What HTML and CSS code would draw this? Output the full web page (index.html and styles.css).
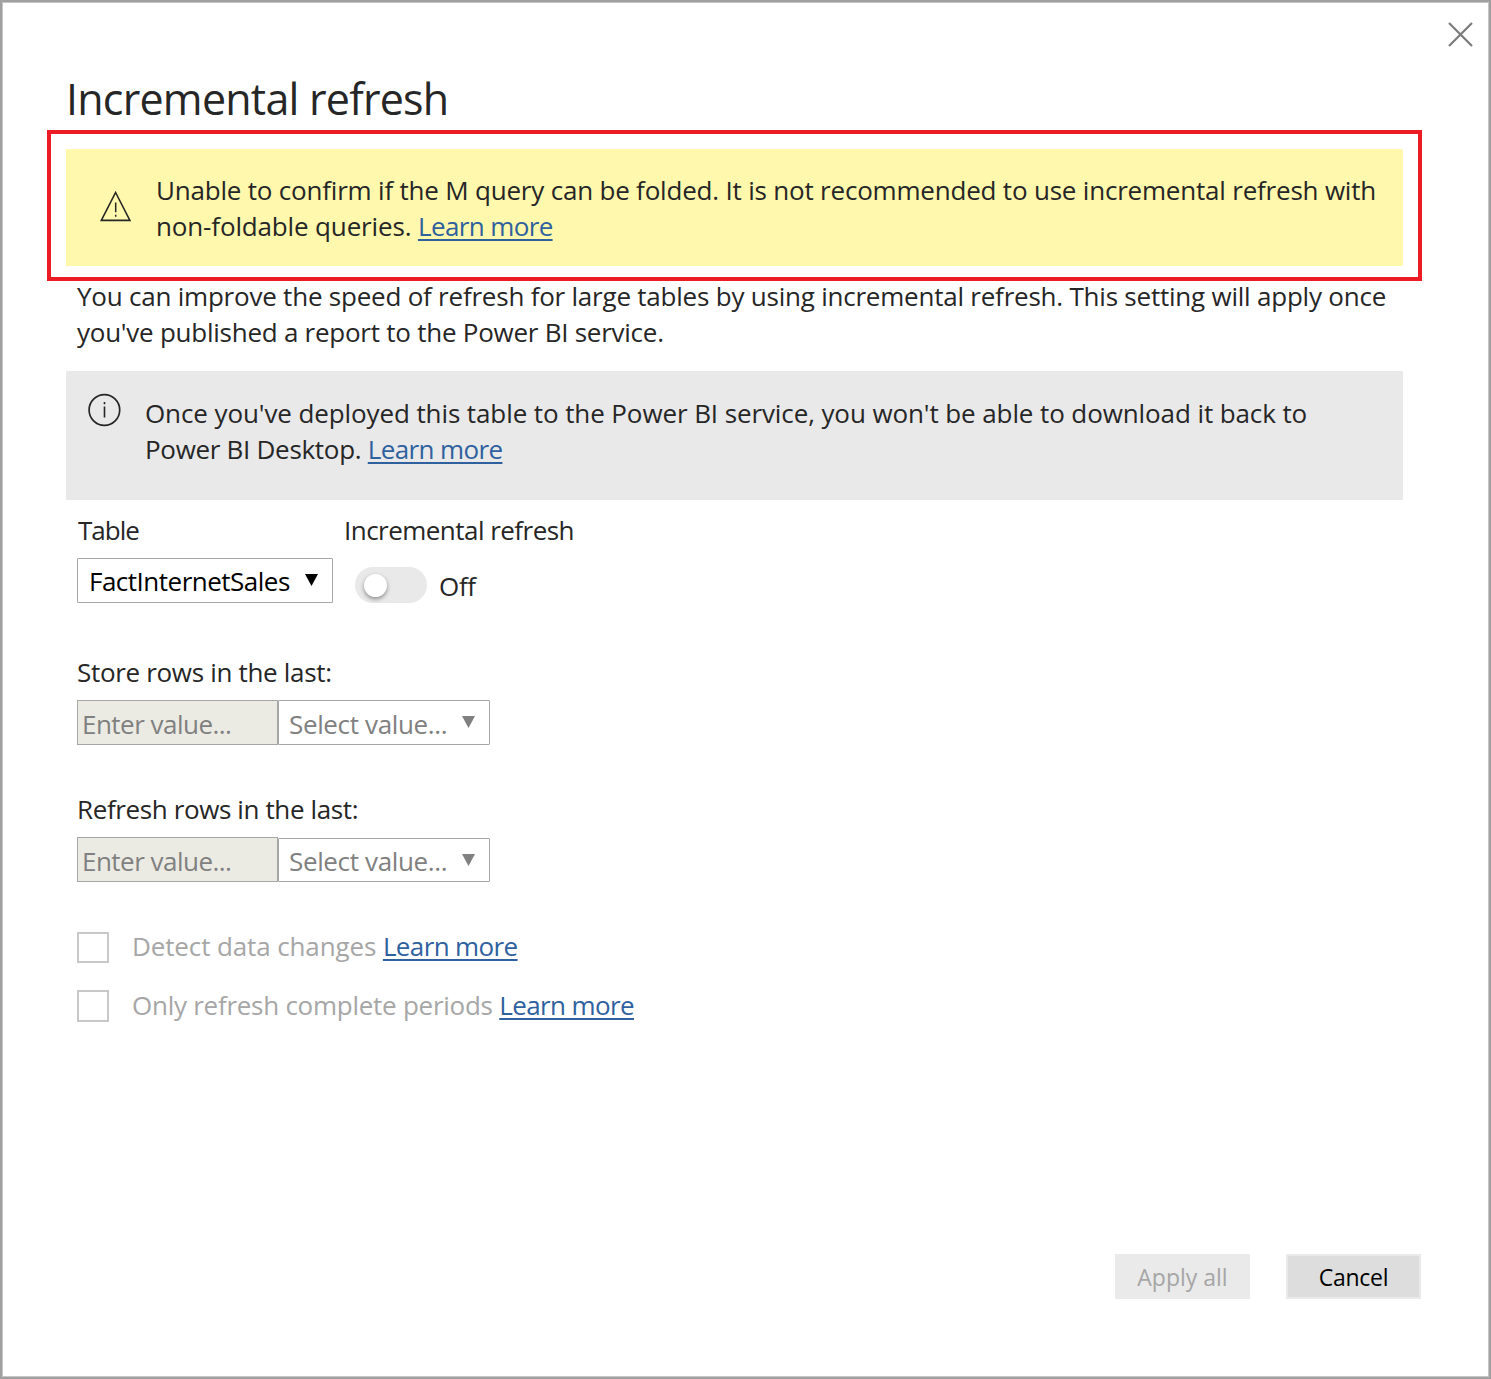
FILE: index.html
```html
<!DOCTYPE html>
<html lang="en">
<head>
<meta charset="utf-8">
<title>Incremental refresh</title>
<link rel="stylesheet" href="styles.css">
</head>
<body>
<main class="dialog">
  <header class="topbar">
    <svg class="close" viewBox="0 0 26 26" width="26" height="26"><path d="M1 1l23 23M24 1l-23 23" fill="none" stroke="#7b7b7b" stroke-width="2.2"/></svg>
  </header>
  <h1 class="title">Incremental refresh</h1>
  <section class="highlight">
    <div class="warning">
      <svg class="warning-icon" viewBox="0 0 32 32" width="32" height="32"><path d="M15.6 2.5L29.9 30.4H1.3z" fill="none" stroke="#262626" stroke-width="1.6"/><path d="M15.7 12.5v9.8M15.7 24.7v2" fill="none" stroke="#262626" stroke-width="1.5"/></svg>
      <p class="text"><span class="line w1">Unable to confirm if the M query can be folded. It is not recommended to use incremental refresh with</span><span class="line"><span class="w2">non-foldable queries. </span><a class="link">Learn more</a></span></p>
    </div>
  </section>
  <p class="text intro"><span class="line p1">You can improve the speed of refresh for large tables by using incremental refresh. This setting will apply once</span><span class="line p2">you've published a report to the Power BI service.</span></p>
  <section class="info">
    <svg class="info-icon" viewBox="0 0 34 34" width="34" height="34"><circle cx="17.4" cy="17" r="15.3" fill="none" stroke="#262626" stroke-width="1.7"/><path d="M17.5 13.5v11M17.5 9v2.2" fill="none" stroke="#262626" stroke-width="1.6"/></svg>
    <p class="text"><span class="line i1">Once you've deployed this table to the Power BI service, you won't be able to download it back to</span><span class="line"><span class="i2">Power BI Desktop. </span><a class="link">Learn more</a></span></p>
  </section>
  <section class="source">
    <div class="table-field">
      <div class="text"><span class="table-label">Table</span></div>
      <div class="select select-table"><span class="fact">FactInternetSales</span><svg class="arrow" viewBox="0 0 13 12" width="13" height="12"><path d="M0 0h13L6.5 12z"/></svg></div>
    </div>
    <div class="toggle-field">
      <div class="text"><span class="toggle-label">Incremental refresh</span></div>
      <div class="toggle-row"><span class="toggle"><span class="knob"></span></span><span class="off">Off</span></div>
    </div>
  </section>
  <section class="rows">
    <div class="text"><span class="store-label">Store rows in the last:</span></div>
    <div class="pair"><div class="input"><span class="enter">Enter value...</span></div><div class="select select-unit"><span class="choose">Select value...</span><svg class="arrow" viewBox="0 0 13 12" width="13" height="12"><path d="M0 0h13L6.5 12z"/></svg></div></div>
  </section>
  <section class="rows">
    <div class="text"><span class="refresh-label">Refresh rows in the last:</span></div>
    <div class="pair"><div class="input"><span class="enter">Enter value...</span></div><div class="select select-unit short"><span class="choose">Select value...</span><svg class="arrow" viewBox="0 0 13 12" width="13" height="12"><path d="M0 0h13L6.5 12z"/></svg></div></div>
  </section>
  <section class="options">
    <div class="option"><span class="box box-first"></span><span class="text"><span class="detect">Detect data changes </span><a class="link">Learn more</a></span></div>
    <div class="option"><span class="box"></span><span class="text"><span class="only">Only refresh complete periods </span><a class="link">Learn more</a></span></div>
  </section>
  <footer class="actions">
    <div class="button disabled">Apply all</div>
    <div class="button cancel">Cancel</div>
  </footer>
</main>
</body>
</html>
```
FILE: styles.css
```css
* { box-sizing: border-box; }
body { margin: 0; background: #fff; color: #262626; font-family: "Open Sans", "Noto Sans", sans-serif; font-size: 26px; line-height: 36px; }
.dialog { display: flex; flex-direction: column; width: 1491px; height: 1379px; border: 2px solid #a0a0a0; box-shadow: inset 0 0 0 1px #c6c6c6; overflow: hidden; }
.topbar { display: flex; justify-content: flex-end; height: 67px; padding: 20px 15px 0 0; }
.close { display: block; }
.title { margin: 0 0 1px 64px; height: 60px; font-size: 43px; line-height: 60px; font-weight: 400; letter-spacing: -.77px; white-space: nowrap; }
.text { margin: 0; white-space: nowrap; }
.line { display: block; width: max-content; }
.link { color: #2f619f; letter-spacing: -.62px; text-decoration: underline; text-decoration-thickness: 2px; text-underline-offset: 3px; }
.highlight { width: 1375px; height: 151px; margin-left: 45px; padding: 15px; border: 4px solid #ed1c24; }
.warning { display: flex; height: 117px; padding: 23px 0 0 34px; background: #fff8ad; }
.warning-icon { margin: 18px 24px 0 0; }
.intro { height: 93px; padding-left: 75px; margin-top: -3px; }
.info { display: flex; width: 1337px; height: 129px; margin-left: 64px; padding: 24px 0 0 21px; background: #e9e9e9; }
.info-icon { margin: -2px 24px 0 0; }
.source { display: flex; margin-left: 75px; padding-top: 12px; height: 154px; }
.table-field { width: 267px; }
.select, .input { display: flex; align-items: flex-start; height: 45px; border: 1px solid #a6a6a6; background: #fff; white-space: nowrap; }
.select { border-radius: 1px; justify-content: space-between; }
.select-table { width: 256px; margin-top: 10px; padding: 4px 14px 0 11px; color: #000; }
.arrow { fill: currentColor; margin-top: 10px; }
.select-table .arrow { margin-top: 11px; }
.toggle-row { display: flex; align-items: center; padding: 18px 0 0 11px; }
.toggle { display: block; width: 72px; height: 36px; padding: 7px 0 0 9px; border-radius: 18px; background: #e9e9e9; }
.knob { display: block; width: 23px; height: 23px; border-radius: 50%; background: #fff; box-shadow: 0 2px 4px rgba(0, 0, 0, .4); }
.off { margin: 2px 0 0 12px; }
.rows { margin-left: 75px; height: 137px; }
.pair { display: flex; align-items: flex-end; margin-top: 10px; height: 45px; color: #808080; }
.input { width: 201px; padding: 5px 4px 0; background: #ebebe4; }
.select-unit { width: 212px; padding: 5px 14px 0 10px; }
.short { height: 44px; padding-top: 4px; }
.short .arrow { margin-top: 11px; }
.options { display: flex; flex-direction: column; gap: 23px; margin-left: 75px; color: #a6a6a6; }
.option { display: flex; height: 36px; }
.box { width: 32px; height: 32px; margin: 3px 23px 0 0; border: 2px solid #c8c8c8; }
.box-first { height: 31px; margin-top: 4px; }
.actions { display: flex; justify-content: flex-end; gap: 36px; margin-top: 231px; padding-right: 68px; }
.button { display: flex; justify-content: center; width: 135px; height: 45px; padding-top: 3px; border: 2px solid #eaeaea; background: #ddd; color: #000; font-size: 23px; white-space: nowrap; }
.disabled { background: #eaeaea; color: #a6a6a6; }

/* Tracking per text run */
.w1 { letter-spacing: -.2px; }
.w2 { letter-spacing: -.15px; }
.p1 { letter-spacing: -.22px; }
.p2 { letter-spacing: -.25px; }
.i1 { letter-spacing: -.1px; }
.i2 { letter-spacing: -.3px; }
.table-label { letter-spacing: -1px; margin-left: 1px; }
.fact { letter-spacing: -.5px; }
.toggle-label { letter-spacing: -.53px; }
.off { letter-spacing: -.3px; }
.store-label { letter-spacing: -.32px; }
.refresh-label { letter-spacing: -.38px; }
.enter { letter-spacing: -.52px; }
.choose { letter-spacing: -.35px; }
.detect { letter-spacing: -.12px; }
.only { letter-spacing: -.26px; }
.cancel { letter-spacing: -.3px; }
```
